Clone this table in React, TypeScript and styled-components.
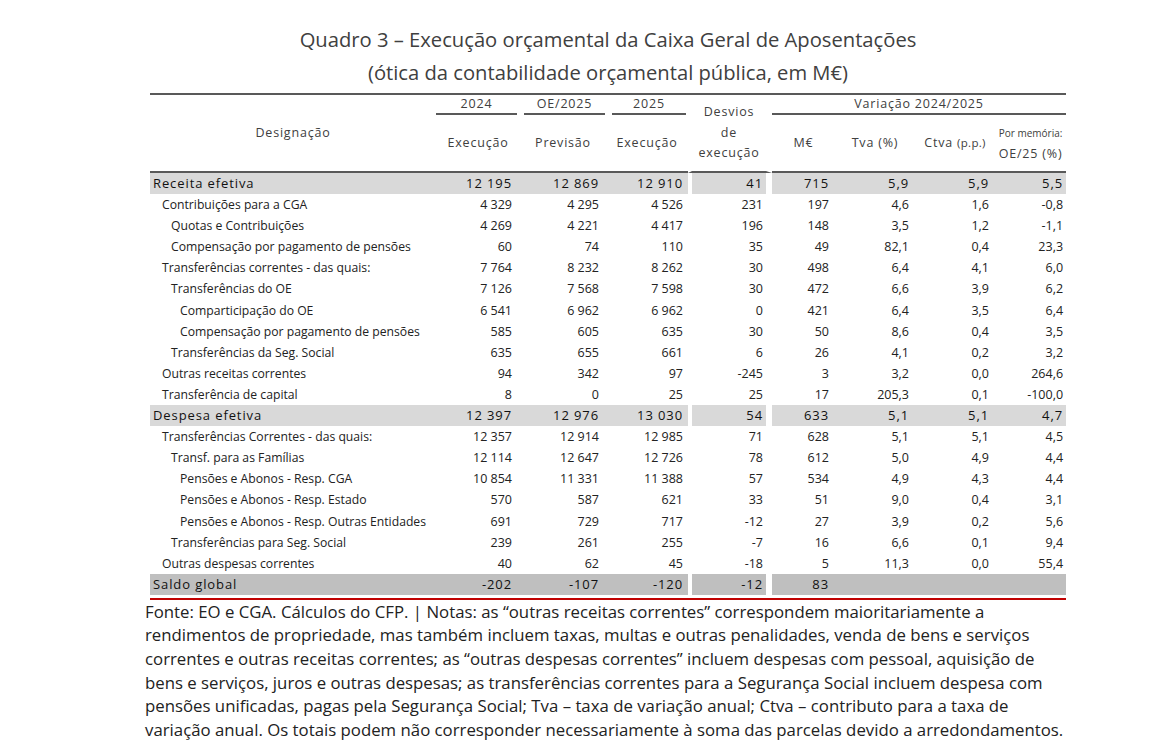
import styled, { createGlobalStyle } from 'styled-components';

type RowKind = 'item' | 'total' | 'balance';

interface RowData {
  label: string;
  level: number;
  kind: RowKind;
  values: string[];
}

const GlobalStyle = createGlobalStyle`
  html, body {
    margin: 0;
    padding: 0;
    background: #ffffff;
  }
  body {
    font-family: 'Open Sans', 'Noto Sans', 'Liberation Sans', sans-serif;
    color: #222222;
  }
`;

// column widths in px: label, 2024, OE/2025, 2025, desvios, M€, Tva, Ctva, OE/25
const COLUMNS = [286, 84, 86, 82, 84, 63, 80, 80, 71];
// right padding for the figures of each numeric column
const NUM_PAD = [8, 7, 5, 3, 6, 6, 6, 3];

const ROWS: RowData[] = [
  { label: 'Receita efetiva', level: 0, kind: 'total', values: ['12 195', '12 869', '12 910', '41', '715', '5,9', '5,9', '5,5'] },
  { label: 'Contribuições para a CGA', level: 1, kind: 'item', values: ['4 329', '4 295', '4 526', '231', '197', '4,6', '1,6', '-0,8'] },
  { label: 'Quotas e Contribuições', level: 2, kind: 'item', values: ['4 269', '4 221', '4 417', '196', '148', '3,5', '1,2', '-1,1'] },
  { label: 'Compensação por pagamento de pensões', level: 2, kind: 'item', values: ['60', '74', '110', '35', '49', '82,1', '0,4', '23,3'] },
  { label: 'Transferências correntes - das quais:', level: 1, kind: 'item', values: ['7 764', '8 232', '8 262', '30', '498', '6,4', '4,1', '6,0'] },
  { label: 'Transferências do OE', level: 2, kind: 'item', values: ['7 126', '7 568', '7 598', '30', '472', '6,6', '3,9', '6,2'] },
  { label: 'Comparticipação do OE', level: 3, kind: 'item', values: ['6 541', '6 962', '6 962', '0', '421', '6,4', '3,5', '6,4'] },
  { label: 'Compensação por pagamento de pensões', level: 3, kind: 'item', values: ['585', '605', '635', '30', '50', '8,6', '0,4', '3,5'] },
  { label: 'Transferências da Seg. Social', level: 2, kind: 'item', values: ['635', '655', '661', '6', '26', '4,1', '0,2', '3,2'] },
  { label: 'Outras receitas correntes', level: 1, kind: 'item', values: ['94', '342', '97', '-245', '3', '3,2', '0,0', '264,6'] },
  { label: 'Transferência de capital', level: 1, kind: 'item', values: ['8', '0', '25', '25', '17', '205,3', '0,1', '-100,0'] },
  { label: 'Despesa efetiva', level: 0, kind: 'total', values: ['12 397', '12 976', '13 030', '54', '633', '5,1', '5,1', '4,7'] },
  { label: 'Transferências Correntes - das quais:', level: 1, kind: 'item', values: ['12 357', '12 914', '12 985', '71', '628', '5,1', '5,1', '4,5'] },
  { label: 'Transf. para as Famílias', level: 2, kind: 'item', values: ['12 114', '12 647', '12 726', '78', '612', '5,0', '4,9', '4,4'] },
  { label: 'Pensões e Abonos - Resp. CGA', level: 3, kind: 'item', values: ['10 854', '11 331', '11 388', '57', '534', '4,9', '4,3', '4,4'] },
  { label: 'Pensões e Abonos - Resp. Estado', level: 3, kind: 'item', values: ['570', '587', '621', '33', '51', '9,0', '0,4', '3,1'] },
  { label: 'Pensões e Abonos - Resp. Outras Entidades', level: 3, kind: 'item', values: ['691', '729', '717', '-12', '27', '3,9', '0,2', '5,6'] },
  { label: 'Transferências para Seg. Social', level: 2, kind: 'item', values: ['239', '261', '255', '-7', '16', '6,6', '0,1', '9,4'] },
  { label: 'Outras despesas correntes', level: 1, kind: 'item', values: ['40', '62', '45', '-18', '5', '11,3', '0,0', '55,4'] },
  { label: 'Saldo global', level: 0, kind: 'balance', values: ['-202', '-107', '-120', '-12', '83', '', '', ''] },
];

const NOTES = [
  'Fonte: EO e CGA. Cálculos do CFP. | Notas: as “outras receitas correntes” correspondem maioritariamente a',
  'rendimentos de propriedade, mas também incluem taxas, multas e outras penalidades, venda de bens e serviços',
  'correntes e outras receitas correntes; as “outras despesas correntes” incluem despesas com pessoal, aquisição de',
  'bens e serviços, juros e outras despesas; as transferências correntes para a Segurança Social incluem despesa com',
  'pensões unificadas, pagas pela Segurança Social; Tva – taxa de variação anual; Ctva – contributo para a taxa de',
  'variação anual. Os totais podem não corresponder necessariamente à soma das parcelas devido a arredondamentos.',
];

const DESVIOS_COL = 3;

export default function App() {
  return (
    <>
      <GlobalStyle />
      <Page>
        <Sheet>
          <Title>Quadro 3 – Execução orçamental da Caixa Geral de Aposentações</Title>
          <Subtitle>(ótica da contabilidade orçamental pública, em M€)</Subtitle>

          <Table>
            <colgroup>
              {COLUMNS.map((w, i) => (
                <col key={i} style={{ width: w }} />
              ))}
            </colgroup>
            <thead>
              <tr>
                <HeadCell rowSpan={2} $bottom>
                  Designação
                </HeadCell>
                <YearCell><YearLine $l={0} $r={3}>2024</YearLine></YearCell>
                <YearCell><YearLine $l={4} $r={1}>OE/2025</YearLine></YearCell>
                <YearCell><YearLine $l={6} $r={2}>2025</YearLine></YearCell>
                <HeadCell rowSpan={2} $bottom $gap>
                  Desvios
                  <br />
                  de
                  <br />
                  execução
                </HeadCell>
                <GroupCell colSpan={4}>Variação 2024/2025</GroupCell>
              </tr>
              <tr>
                <HeadCell $bottom>Execução</HeadCell>
                <HeadCell $bottom>Previsão</HeadCell>
                <HeadCell $bottom>Execução</HeadCell>
                <HeadCell $bottom>M€</HeadCell>
                <HeadCell $bottom>Tva (%)</HeadCell>
                <HeadCell $bottom>
                  Ctva <Small>(p.p.)</Small>
                </HeadCell>
                <HeadCell $bottom>
                  <Memo>Por memória:</Memo>
                  OE/25 (%)
                </HeadCell>
              </tr>
            </thead>
            <tbody>
              {ROWS.map((row, r) => (
                <Row key={r} $kind={row.kind}>
                  <LabelCell $level={row.level} $kind={row.kind}>
                    {row.label}
                  </LabelCell>
                  {row.values.map((v, c) => (
                    <NumCell key={c} $kind={row.kind} $pad={NUM_PAD[c]} $gap={c === DESVIOS_COL}>
                      {v}
                    </NumCell>
                  ))}
                </Row>
              ))}
            </tbody>
          </Table>

          <RedRule />
          <Notes>
            {NOTES.map((line, i) => (
              <NoteLine key={i}>{line}</NoteLine>
            ))}
          </Notes>
        </Sheet>
      </Page>
    </>
  );
}

//#region STYLED COMPONENTS
const Page = styled.div`
  padding: 23px 0 0 150px;
  width: 1161px;
  height: 743px;
  box-sizing: border-box;
  overflow: hidden;
`;

const Sheet = styled.div`
  width: 916px;
`;

const Title = styled.h1`
  margin: 0;
  font-size: 20.2px;
  font-weight: 400;
  line-height: 32px;
  color: #404040;
  text-align: center;
  white-space: nowrap;
`;

const Subtitle = styled.h2`
  margin: 0 0 3px;
  font-size: 20.2px;
  font-weight: 400;
  line-height: 35px;
  color: #404040;
  text-align: center;
  white-space: nowrap;
`;

const Table = styled.table`
  width: 916px;
  table-layout: fixed;
  border-collapse: separate;
  border-spacing: 0;
  border-top: 2px solid #595959;
  font-size: 12.5px;
`;

const HeadCell = styled.th<{ $bottom?: boolean; $gap?: boolean }>`
  padding: 0;
  font-weight: 400;
  color: #404040;
  letter-spacing: 0.8px;
  line-height: 20.5px;
  text-align: center;
  vertical-align: middle;
  white-space: nowrap;
  height: 56px;
  border-bottom: ${({ $bottom }) => ($bottom ? '2px solid #595959' : 'none')};
  border-left: ${({ $gap }) => ($gap ? '4px solid #fff' : 'none')};
  border-right: ${({ $gap }) => ($gap ? '6px solid #fff' : 'none')};
`;

const YearCell = styled.th`
  padding: 0;
  font-weight: 400;
  color: #404040;
  letter-spacing: 0.8px;
  text-align: center;
  vertical-align: top;
  height: 20px;
`;

const YearLine = styled.div<{ $l: number; $r: number }>`
  margin: 0 ${({ $r }) => $r}px 0 ${({ $l }) => $l}px;
  line-height: 18px;
  border-bottom: 2px solid #595959;
`;

const GroupCell = styled.th`
  padding: 0;
  font-weight: 400;
  color: #404040;
  letter-spacing: 0.8px;
  line-height: 18px;
  text-align: center;
  vertical-align: top;
  height: 18px;
  border-bottom: 2px solid #595959;
`;

const Small = styled.span`
  font-size: 11.5px;
  letter-spacing: 0.3px;
`;

const Memo = styled.span`
  display: block;
  font-size: 10px;
  letter-spacing: 0;
  line-height: 22px;
`;

const Row = styled.tr<{ $kind: RowKind }>`
  height: 21.1px;
  background: ${({ $kind }) =>
    $kind === 'total' ? '#d9d9d9' : $kind === 'balance' ? '#bfbfbf' : 'transparent'};
`;

const LabelCell = styled.td<{ $level: number; $kind: RowKind }>`
  padding: 0 0 0 ${({ $level }) => 3 + $level * 9}px;
  line-height: 21.1px;
  white-space: nowrap;
  color: ${({ $kind }) => ($kind === 'item' ? '#222' : '#111')};
  letter-spacing: ${({ $kind }) => ($kind === 'item' ? '0' : '0.9px')};
  font-size: ${({ $kind }) => ($kind === 'item' ? '12.2px' : '13px')};
`;

const NumCell = styled.td<{ $kind: RowKind; $pad: number; $gap: boolean }>`
  padding: 0 ${({ $pad }) => $pad}px 0 0;
  line-height: 21.1px;
  text-align: right;
  white-space: nowrap;
  color: ${({ $kind }) => ($kind === 'item' ? '#222' : '#111')};
  letter-spacing: ${({ $kind }) => ($kind === 'item' ? '0' : '0.9px')};
  font-size: ${({ $kind }) => ($kind === 'item' ? '12.5px' : '13px')};
  border-left: ${({ $gap }) => ($gap ? '4px solid #fff' : 'none')};
  border-right: ${({ $gap }) => ($gap ? '6px solid #fff' : 'none')};
`;

const RedRule = styled.div`
  height: 2px;
  margin-top: 3px;
  background: #c00000;
`;

const Notes = styled.div`
  margin-left: -5px;
  font-size: 16.8px;
  line-height: 23.6px;
  color: #222;
`;

const NoteLine = styled.span`
  display: block;
  white-space: nowrap;
`;
//#endregion
